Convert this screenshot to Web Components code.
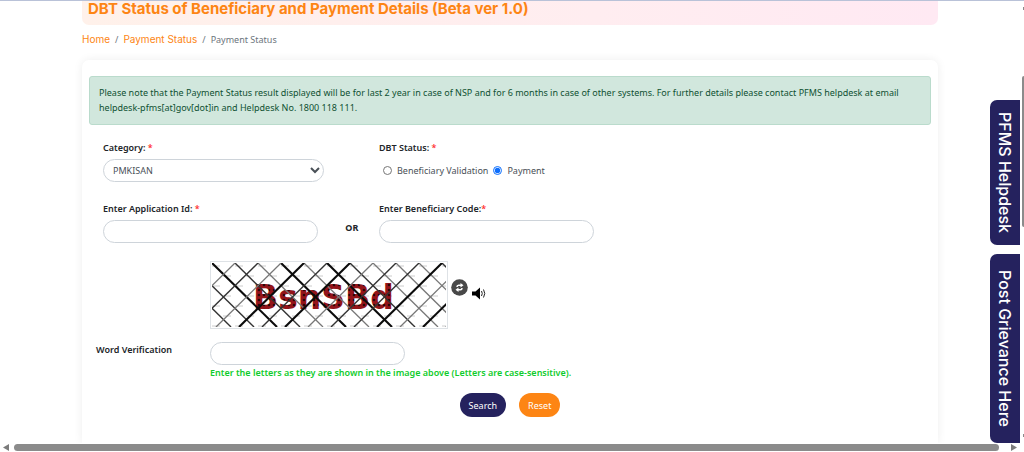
<!DOCTYPE html>
<html lang="en">
<head>
<meta charset="utf-8">
<title>DBT Status of Beneficiary and Payment Details</title>
<style>
  :root {
    --navy: #25225e;
    --orange: #fd8514;
    --border: #dee2e6;
    --body-font: "Noto Sans", "Open Sans", sans-serif;
    --head-font: Inter, "Open Sans", sans-serif;
  }

  body {
    margin: 0;
    background: #fff;
    color: #212529;
    font: 9px/15px var(--body-font);
  }
</style>
</head>
<body>
<page-shell>
  <page-title slot="main">DBT Status of Beneficiary and Payment Details (Beta ver 1.0)</page-title>
  <crumb-trail slot="main"></crumb-trail>
  <status-card slot="main">
    <info-alert>Please note that the Payment Status result displayed will be for last 2 year in case of NSP and for 6 months in case of other systems. For further details please contact PFMS helpdesk at email helpdesk-pfms[at]gov[dot]in and Helpdesk No. 1800 118 111.</info-alert>
    <status-form></status-form>
  </status-card>
  <side-tabs slot="side"></side-tabs>
</page-shell>

<script>
(function () {
  'use strict';

  class BaseElement extends HTMLElement {
    constructor() {
      super();
      this.attachShadow({ mode: 'open' });
    }

    connectedCallback() {
      this.shadowRoot.innerHTML = this.template();
    }
  }

  class PageShell extends BaseElement {
    template() {
      return `
        <style>
          :host {
            display: grid;
            grid-template: minmax(0, 1fr) 9px / minmax(0, 1fr) 4px;
            box-sizing: border-box;
            height: 100vh;
            border-top: 1px solid #b9c2d8;
            overflow: hidden;
          }

          main {
            display: flex;
            flex-direction: column;
            padding: 0 82px;
            overflow: hidden;
          }

          .vbar {
            display: flex;
            flex-direction: column;
            align-items: flex-end;
            padding: 6px 0;
          }

          .vbar i {
            width: 1px;
            height: 3px;
            background: #8b8b8b;
          }

          .vbar i:last-child {
            margin-top: auto;
          }

          .vbar b {
            width: 2px;
            height: 35%;
            margin-top: 66px;
            background: #8b8b8b;
            border-radius: 2px 0 0 2px;
          }

          .hbar {
            grid-column: 1 / -1;
            display: flex;
            align-items: center;
            gap: 5px;
            padding: 0 7px 0 3px;
          }

          .hbar b {
            flex: 1;
            height: 7px;
            border-radius: 4px;
            background: #8b8b8b;
          }

          .hbar svg {
            width: 6px;
            height: 7px;
            fill: #7c7c7c;
          }

          .hbar svg:last-child {
            margin-left: 7px;
          }
        </style>
        <main><slot name="main"></slot></main>
        <div class="vbar"><i></i><b></b><i></i></div>
        <div class="hbar">
          <svg viewBox="0 0 6 7"><path d="M6 0v7L0 3.5z"/></svg>
          <b></b>
          <svg viewBox="0 0 6 7"><path d="M0 0v7l6-3.5z"/></svg>
        </div>
        <slot name="side"></slot>
      `;
    }
  }

  class PageTitle extends BaseElement {
    template() {
      return `
        <style>
          :host {
            display: block;
            padding: 0 6px 8px;
            border-radius: 0 0 7px 7px;
            background: linear-gradient(90deg, #fff1ea, #ffedf0 60%, #ffe9f3);
          }

          h1 {
            margin: 0;
            font: 700 15px/16px var(--head-font);
            color: var(--orange);
          }
        </style>
        <h1><slot></slot></h1>
      `;
    }
  }

  class CrumbTrail extends BaseElement {
    template() {
      return `
        <style>
          :host {
            display: block;
            padding: 7px 0 13px;
          }

          ol {
            display: flex;
            gap: 5px;
            margin: 0;
            padding: 0;
            list-style: none;
            color: #6c757d;
          }

          li + li::before {
            content: "/";
            margin-right: 5px;
          }

          a {
            font-family: var(--head-font);
            font-size: 10px;
            color: var(--orange);
            text-decoration: none;
          }
        </style>
        <nav aria-label="breadcrumb">
          <ol>
            <li><a href="#">Home</a></li>
            <li><a href="#">Payment Status</a></li>
            <li>Payment Status</li>
          </ol>
        </nav>
      `;
    }
  }

  class StatusCard extends BaseElement {
    template() {
      return `
        <style>
          :host {
            display: block;
            flex: 1 0 auto;
            padding: 16px 7px 0;
            border-radius: 7px 7px 0 0;
            background: #fff;
            box-shadow: 0 0 10px rgba(0, 0, 0, 0.07);
          }
        </style>
        <slot></slot>
      `;
    }
  }

  class InfoAlert extends BaseElement {
    template() {
      return `
        <style>
          :host {
            display: block;
            padding: 8px 9px 9px;
            border: 1px solid #badbcc;
            border-radius: 3px;
            background: #d1e7dd;
            color: #0f5132;
          }
        </style>
        <div role="alert"><slot></slot></div>
      `;
    }
  }

  class CaptchaImage extends BaseElement {
    // weights of the mesh lines, one for each 23 unit step along the top edge
    lines() {
      const down = [1, 1, 2, 1, 0, 2, 0, 2, 1, 0, 0, 0, 1];
      const up = [0, 1, 0, 2, 1, 2, 0, 1, 1, 2, 0, 2, 1];
      const style = [
        'stroke="#777" stroke-width="1.3"',
        'stroke="#333" stroke-width="1.4"',
        'stroke="#0b0b0b" stroke-width="2.1"',
      ];
      let out = '';
      down.forEach((w, i) => {
        const x = (i - 2) * 23;
        out += `<path ${style[w]} d="M${x} 0l65 64"/>`;
      });
      up.forEach((w, i) => {
        const x = (i + 1) * 23;
        out += `<path ${style[w]} d="M${x} 0l-65 64"/>`;
      });
      return out;
    }

    dashes() {
      let out = '';
      for (let row = 0; row < 7; row++) {
        for (let col = 0; col < 11; col++) {
          out += `<path d="M${col * 23 + (row % 2) * 11} ${row * 10 + 3}h8"/>`;
        }
      }
      return out;
    }

    template() {
      return `
        <style>
          :host {
            display: block;
            padding: 1px;
            border: 1px solid var(--border);
          }

          svg {
            display: block;
            width: 234px;
            height: 64px;
          }

          text {
            font: 700 33px "DejaVu Sans", sans-serif;
          }
        </style>
        <svg viewBox="0 0 234 64" role="img" aria-label="Captcha">
          <defs>
            <pattern id="dots" width="5" height="5" patternUnits="userSpaceOnUse">
              <rect width="5" height="5" fill="#94141a"/>
              <circle cx="2" cy="2" r="1.3" fill="#2c0709"/>
            </pattern>
          </defs>
          <g stroke="#ccc">${this.dashes()}</g>
          <text x="41" y="46" fill="url(#dots)">BsnSBd</text>
          <g fill="none">${this.lines()}</g>
        </svg>
      `;
    }
  }

  class StatusForm extends BaseElement {
    template() {
      return `
        <style>
          :host {
            display: block;
          }

          .fields {
            display: grid;
            grid-template-columns: repeat(3, 1fr);
            row-gap: 19px;
            padding: 15px 0 0 14px;
          }

          label, .label {
            font-weight: 600;
            color: #212529;
          }

          .label {
            display: block;
            margin-bottom: 4px;
          }

          .label em {
            color: #f33;
            font-style: normal;
          }

          fieldset {
            margin: 0;
            padding: 0;
            border: 0;
          }

          legend {
            padding: 0;
          }

          select, input[type="text"] {
            box-sizing: border-box;
            height: 23px;
            border: 1px solid #ced4da;
            border-radius: 12px;
            background: #fff;
            color: #495057;
            font: inherit;
          }

          select {
            width: 80%;
            padding: 0 0 0 5px;
          }

          .line {
            display: flex;
            gap: 27px;
          }

          .line input {
            width: 78%;
          }

          .or {
            font-weight: 700;
          }

          .radios {
            display: flex;
            align-items: center;
            gap: 5px;
            height: 23px;
            padding-left: 4px;
          }

          .radios label {
            font-weight: 400;
            color: #495057;
          }

          .radios input {
            width: 9px;
            height: 9px;
            margin: 0;
            accent-color: #0d6efd;
          }

          .verify {
            display: grid;
            grid-template-columns: 114px 1fr;
            padding: 18px 0 0 7px;
          }

          .captcha {
            grid-column: 2;
            display: flex;
            gap: 3px;
            margin-bottom: 13px;
          }

          .captcha button {
            width: 17px;
            height: 17px;
            margin-top: 18px;
            padding: 0;
            border: 0;
            background: none;
          }

          .captcha button + button {
            margin-top: 24px;
          }

          .captcha svg {
            display: block;
            width: 100%;
            height: 100%;
          }

          .entry {
            display: flex;
            flex-direction: column;
            align-items: flex-start;
          }

          .entry input {
            width: 27%;
          }

          .hint {
            font-weight: 600;
            color: #10cc2c;
          }

          .actions {
            display: flex;
            justify-content: center;
            gap: 13px;
            padding-top: 13px;
          }

          .actions button {
            height: 24px;
            padding: 0 9px;
            border: 0;
            border-radius: 12px;
            background: var(--navy);
            color: #fff;
            font: inherit;
          }

          .actions button[type="reset"] {
            background: var(--orange);
          }
        </style>
        <form>
          <div class="fields">
            <div>
              <label class="label" for="category">Category: <em>*</em></label>
              <select id="category"><option>PMKISAN</option></select>
            </div>
            <fieldset>
              <legend class="label">DBT Status: <em>*</em></legend>
              <div class="radios">
                <input type="radio" name="dbt" id="validation">
                <label for="validation">Beneficiary Validation</label>
                <input type="radio" name="dbt" id="payment" checked>
                <label for="payment">Payment</label>
              </div>
            </fieldset>
            <span></span>
            <div>
              <label class="label" for="app-id">Enter Application Id: <em>*</em></label>
              <div class="line">
                <input type="text" id="app-id">
                <span class="or">OR</span>
              </div>
            </div>
            <div>
              <label class="label" for="ben-code">Enter Beneficiary Code:<em>*</em></label>
              <div class="line"><input type="text" id="ben-code"></div>
            </div>
          </div>

          <div class="verify">
            <div class="captcha">
              <captcha-image></captcha-image>
              <button type="button" aria-label="Refresh captcha">
                <svg viewBox="0 0 17 17">
                  <circle cx="8.5" cy="8.5" r="8.3" fill="#484848"/>
                  <path fill="none" stroke="#fff" stroke-width="1.5" d="M10.500 6.200H7.600q-1.600 0-1.600 1.800M6.500 10.800h2.900q1.600 0 1.600-1.800"/>
                  <path fill="#fff" d="M9.500 4l3 2.200-3 2.200zM7.500 8.600V13l-3-2.200z"/>
                </svg>
              </button>
              <button type="button" aria-label="Play captcha audio">
                <svg viewBox="0 0 17 17">
                  <path d="M1 6.500h3.500L9 2.500v12l-4.500-4H1z"/>
                  <path fill="none" stroke="#222" d="M10.500 6q1.500 2.500 0 5M12.500 4.500q2.500 4 0 8"/>
                </svg>
              </button>
            </div>
            <label for="word">Word Verification</label>
            <div class="entry">
              <input type="text" id="word">
              <span class="hint">Enter the letters as they are shown in the image above (Letters are case-sensitive).</span>
            </div>
          </div>

          <div class="actions">
            <button type="button">Search</button>
            <button type="reset">Reset</button>
          </div>
        </form>
      `;
    }
  }

  class SideTabs extends BaseElement {
    template() {
      return `
        <style>
          :host {
            display: flex;
            flex-direction: column;
            gap: 9px;
            position: fixed;
            top: 100px;
            right: 4px;
          }

          a {
            padding: 12px 0;
            border-radius: 7px 0 0 7px;
            background: var(--navy);
            color: #fff;
            font: 500 16px/30px var(--head-font);
            text-decoration: none;
            writing-mode: vertical-rl;
          }

          a:last-child {
            padding: 16px 0;
          }
        </style>
        <a href="#">PFMS Helpdesk</a>
        <a href="#">Post Grievance Here</a>
      `;
    }
  }

  customElements.define('page-shell', PageShell);
  customElements.define('page-title', PageTitle);
  customElements.define('crumb-trail', CrumbTrail);
  customElements.define('status-card', StatusCard);
  customElements.define('info-alert', InfoAlert);
  customElements.define('captcha-image', CaptchaImage);
  customElements.define('status-form', StatusForm);
  customElements.define('side-tabs', SideTabs);
})();
</script>
</body>
</html>
